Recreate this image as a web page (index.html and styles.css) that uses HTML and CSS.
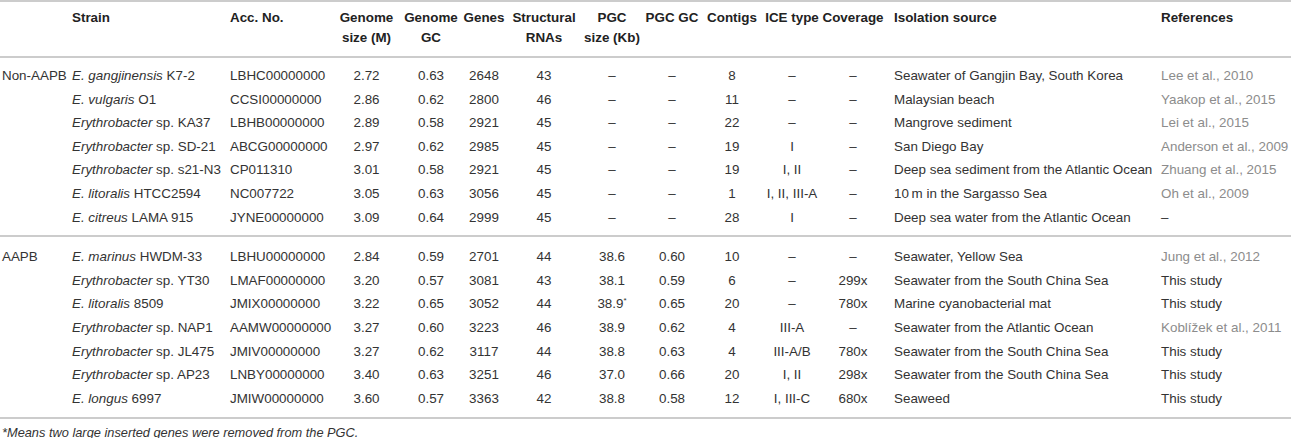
FILE: index.html
```html
<!DOCTYPE html>
<html>
<head>
<meta charset="utf-8">
<link rel="stylesheet" href="styles.css">
</head>
<body>
<table class="tbl">
  <colgroup>
    <col class="c-group"><col class="c-strain"><col class="c-acc"><col class="c-gsize"><col class="c-ggc"><col class="c-genes"><col class="c-rna"><col class="c-pgcs"><col class="c-pgcgc"><col class="c-contigs"><col class="c-ice"><col class="c-cov"><col class="c-src"><col class="c-ref">
  </colgroup>
  <thead>
    <tr>
      <th class="l"></th>
      <th class="l">Strain</th>
      <th class="l">Acc. No.</th>
      <th>Genome<br>size (M)</th>
      <th>Genome<br>GC</th>
      <th>Genes</th>
      <th>Structural<br>RNAs</th>
      <th>PGC<br>size (Kb)</th>
      <th>PGC GC</th>
      <th>Contigs</th>
      <th>ICE type</th>
      <th>Coverage</th>
      <th class="l src">Isolation source</th>
      <th class="l">References</th>
    </tr>
  </thead>
  <tbody class="grp">
    <tr><td class="l">Non-AAPB</td><td class="l"><i>E. gangjinensis</i> K7-2</td><td class="l">LBHC00000000</td><td>2.72</td><td>0.63</td><td>2648</td><td>43</td><td>–</td><td>–</td><td>8</td><td>–</td><td>–</td><td class="l src">Seawater of Gangjin Bay, South Korea</td><td class="l ref">Lee et al., 2010</td></tr>
    <tr><td class="l"></td><td class="l"><i>E. vulgaris</i> O1</td><td class="l">CCSI00000000</td><td>2.86</td><td>0.62</td><td>2800</td><td>46</td><td>–</td><td>–</td><td>11</td><td>–</td><td>–</td><td class="l src">Malaysian beach</td><td class="l ref">Yaakop et al., 2015</td></tr>
    <tr><td class="l"></td><td class="l"><i>Erythrobacter</i> sp. KA37</td><td class="l">LBHB00000000</td><td>2.89</td><td>0.58</td><td>2921</td><td>45</td><td>–</td><td>–</td><td>22</td><td>–</td><td>–</td><td class="l src">Mangrove sediment</td><td class="l ref">Lei et al., 2015</td></tr>
    <tr><td class="l"></td><td class="l"><i>Erythrobacter</i> sp. SD-21</td><td class="l">ABCG00000000</td><td>2.97</td><td>0.62</td><td>2985</td><td>45</td><td>–</td><td>–</td><td>19</td><td>I</td><td>–</td><td class="l src">San Diego Bay</td><td class="l ref">Anderson et al., 2009</td></tr>
    <tr><td class="l"></td><td class="l"><i>Erythrobacter</i> sp. s21-N3</td><td class="l">CP011310</td><td>3.01</td><td>0.58</td><td>2921</td><td>45</td><td>–</td><td>–</td><td>19</td><td>I, II</td><td>–</td><td class="l src">Deep sea sediment from the Atlantic Ocean</td><td class="l ref">Zhuang et al., 2015</td></tr>
    <tr><td class="l"></td><td class="l"><i>E. litoralis</i> HTCC2594</td><td class="l">NC007722</td><td>3.05</td><td>0.63</td><td>3056</td><td>45</td><td>–</td><td>–</td><td>1</td><td>I, II, III-A</td><td>–</td><td class="l src">10&#8201;m in the Sargasso Sea</td><td class="l ref">Oh et al., 2009</td></tr>
    <tr><td class="l"></td><td class="l"><i>E. citreus</i> LAMA 915</td><td class="l">JYNE00000000</td><td>3.09</td><td>0.64</td><td>2999</td><td>45</td><td>–</td><td>–</td><td>28</td><td>I</td><td>–</td><td class="l src">Deep sea water from the Atlantic Ocean</td><td class="l">–</td></tr>
  </tbody>
  <tbody class="grp">
    <tr><td class="l">AAPB</td><td class="l"><i>E. marinus</i> HWDM-33</td><td class="l">LBHU00000000</td><td>2.84</td><td>0.59</td><td>2701</td><td>44</td><td>38.6</td><td>0.60</td><td>10</td><td>–</td><td>–</td><td class="l src">Seawater, Yellow Sea</td><td class="l ref">Jung et al., 2012</td></tr>
    <tr><td class="l"></td><td class="l"><i>Erythrobacter</i> sp. YT30</td><td class="l">LMAF00000000</td><td>3.20</td><td>0.57</td><td>3081</td><td>43</td><td>38.1</td><td>0.59</td><td>6</td><td>–</td><td>299x</td><td class="l src">Seawater from the South China Sea</td><td class="l">This study</td></tr>
    <tr><td class="l"></td><td class="l"><i>E. litoralis</i> 8509</td><td class="l">JMIX00000000</td><td>3.22</td><td>0.65</td><td>3052</td><td>44</td><td>38.9<sup class="star">*</sup></td><td>0.65</td><td>20</td><td>–</td><td>780x</td><td class="l src">Marine cyanobacterial mat</td><td class="l">This study</td></tr>
    <tr><td class="l"></td><td class="l"><i>Erythrobacter</i> sp. NAP1</td><td class="l">AAMW00000000</td><td>3.27</td><td>0.60</td><td>3223</td><td>46</td><td>38.9</td><td>0.62</td><td>4</td><td>III-A</td><td>–</td><td class="l src">Seawater from the Atlantic Ocean</td><td class="l ref">Koblížek et al., 2011</td></tr>
    <tr><td class="l"></td><td class="l"><i>Erythrobacter</i> sp. JL475</td><td class="l">JMIV00000000</td><td>3.27</td><td>0.62</td><td>3117</td><td>44</td><td>38.8</td><td>0.63</td><td>4</td><td>III-A/B</td><td>780x</td><td class="l src">Seawater from the South China Sea</td><td class="l">This study</td></tr>
    <tr><td class="l"></td><td class="l"><i>Erythrobacter</i> sp. AP23</td><td class="l">LNBY00000000</td><td>3.40</td><td>0.63</td><td>3251</td><td>46</td><td>37.0</td><td>0.66</td><td>20</td><td>I, II</td><td>298x</td><td class="l src">Seawater from the South China Sea</td><td class="l">This study</td></tr>
    <tr><td class="l"></td><td class="l"><i>E. longus</i> 6997</td><td class="l">JMIW00000000</td><td>3.60</td><td>0.57</td><td>3363</td><td>42</td><td>38.8</td><td>0.58</td><td>12</td><td>I, III-C</td><td>680x</td><td class="l src">Seaweed</td><td class="l">This study</td></tr>
  </tbody>
</table>
<p class="note"><i>*Means two large inserted genes were removed from the PGC.</i></p>
</body>
</html>
```

FILE: styles.css
```css
html, body {
  margin: 0;
  padding: 0;
  background: #ffffff;
}
body {
  font-family: "Liberation Sans", Arial, Helvetica, sans-serif;
  font-size: 13.4px;
  color: #333333;
  width: 1291px;
  overflow: hidden;
}
.tbl {
  width: 1291px;
  border-collapse: collapse;
  table-layout: fixed;
  border-top: 2px solid #cccccc;
  border-bottom: 2px solid #cccccc;
}
.c-group { width: 70px; }
.c-strain { width: 158px; }
.c-acc { width: 105px; }
.c-gsize { width: 67px; }
.c-ggc { width: 62px; }
.c-genes { width: 44px; }
.c-rna { width: 76px; }
.c-pgcs { width: 60px; }
.c-pgcgc { width: 60px; }
.c-contigs { width: 60px; }
.c-ice { width: 60px; }
.c-cov { width: 62px; }
.c-src { width: 275px; }
.c-ref { width: 132px; }

th, td {
  padding: 0;
  text-align: center;
  white-space: nowrap;
  overflow: visible;
}
th {
  font-size: 13.4px;
  font-weight: bold;
  color: #222222;
  line-height: 20px;
  vertical-align: top;
  padding-top: 6px;
  padding-bottom: 8px;
  border-bottom: 2px solid #cccccc;
}
td {
  line-height: 23.6px;
  height: 23.6px;
}
.l {
  text-align: left;
  padding-left: 2px;
}
.src {
  padding-left: 10px;
}
.ref {
  color: #8c8c8c;
}
.grp + .grp {
  border-top: 2px solid #cccccc;
}
.grp tr:first-child td {
  padding-top: 6px;
}
.grp tr:last-child td {
  padding-bottom: 6px;
}
.grp + .grp tr:first-child td {
  padding-top: 8px;
}
.grp + .grp tr:last-child td {
  padding-bottom: 7px;
}
.star {
  font-size: 8px;
  line-height: 0;
  vertical-align: 5px;
}
.note {
  margin: 0;
  padding: 6px 0 0 2px;
  font-size: 12.8px;
  line-height: 16px;
}
```
